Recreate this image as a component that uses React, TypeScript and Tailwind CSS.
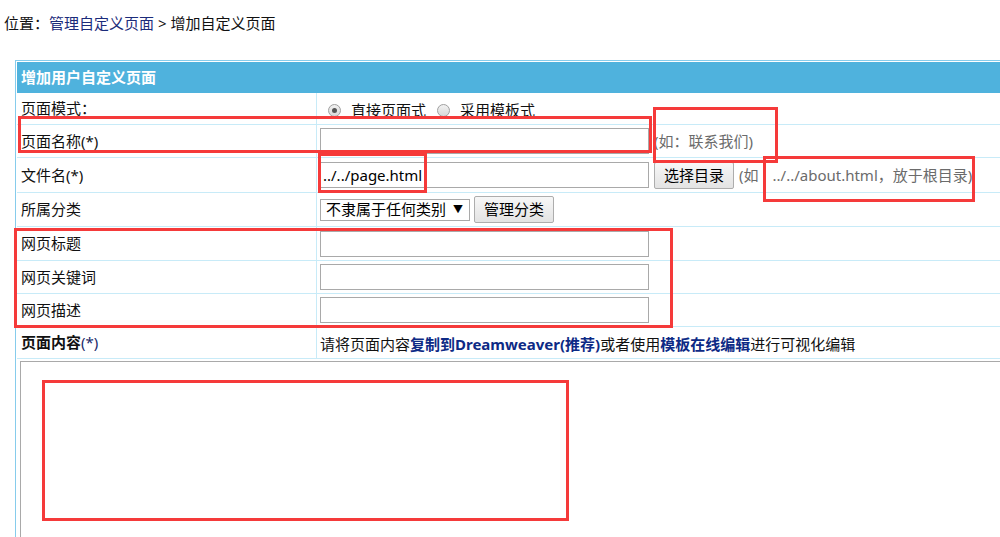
import React from "react";

const font = { fontFamily: '"Noto Sans", "Noto Sans CJK SC", sans-serif' };

function Row({ h, label, children, bold }: { h: string; label: React.ReactNode; children?: React.ReactNode; bold?: boolean }) {
  return (
    <div className={`flex ${h} border-b border-[#c8ebf8]`}>
      <div className={`w-[300px] shrink-0 flex items-center pl-[4px] border-r border-[#c8ebf8] ${bold ? "font-bold" : ""}`}>{label}</div>
      <div className="flex-1 flex items-center pl-[3px]">{children}</div>
    </div>
  );
}

function Input({ value }: { value?: string }) {
  return (
    <div className="w-[329px] h-[26px] border border-[#a9a9a9] bg-white flex items-center pl-[2px] text-black">{value}</div>
  );
}

function Btn({ children, h = "h-[27px]" }: { children: React.ReactNode; h?: string }) {
  return (
    <div className={`w-[80px] ${h} border border-[#adadad] rounded-[2px] bg-linear-to-b from-[#f7f7f7] to-[#e3e3e3] flex items-center justify-center text-black`}>
      {children}
    </div>
  );
}

function Radio({ checked }: { checked?: boolean }) {
  return (
    <span className="w-[13px] h-[13px] rounded-full border border-[#a0a0a0] bg-linear-to-b from-[#f2f2f2] to-[#d8d8d8] flex items-center justify-center">
      {checked && <span className="w-[5px] h-[5px] rounded-full bg-[#555]" />}
    </span>
  );
}

function RedBox({ cls }: { cls: string }) {
  return <div className={`absolute border-[3px] border-[#f53a3a] pointer-events-none ${cls}`} />;
}

export default function App() {
  return (
    <div className="relative w-[1000px] h-[537px] overflow-hidden bg-white text-[15px] text-[#111]" style={font}>
      <div className="pt-[13px] pl-[4px] leading-[20px]">
        位置：<span className="text-[#1b2b7a]">管理自定义页面</span> &gt; 增加自定义页面
      </div>

      <div className="mt-[27px] ml-[15px] w-[1000px] h-[500px] border-l border-t border-[#86ccec] p-[1px] pr-0">
        <div className="h-[31px] bg-[#4fb2dd] flex items-center pl-[4px] text-white font-bold">增加用户自定义页面</div>

        <Row h="h-[32px]" label="页面模式：">
          <div className="flex items-center pl-[8px] pt-[3px]">
            <Radio checked />
            <span className="ml-[10px]">直接页面式</span>
            <span className="ml-[11px]"><Radio /></span>
            <span className="ml-[10px]">采用模板式</span>
          </div>
        </Row>

        <Row h="h-[33px]" label="页面名称(*)">
          <Input />
          <span className="ml-[5px] text-[#6b6b6b]">(如：联系我们)</span>
        </Row>

        <Row h="h-[35px]" label="文件名(*)">
          <Input value="../../page.html" />
          <span className="ml-[5px]"><Btn>选择目录</Btn></span>
          <span className="ml-[5px] text-[#6b6b6b]">(如</span>
          <span className="ml-[14px] text-[#6b6b6b]">../../about.html，放于根目录)</span>
        </Row>

        <Row h="h-[34px]" label="所属分类">
          <div className="w-[150px] h-[22px] border border-[#a9a9a9] bg-white flex items-center justify-between pl-[5px] pr-[6px] text-black">
            <span>不隶属于任何类别</span>
            <span className="text-[10px]">▼</span>
          </div>
          <span className="ml-[4px]"><Btn>管理分类</Btn></span>
        </Row>

        <Row h="h-[34px]" label="网页标题">
          <Input />
        </Row>
        <Row h="h-[33px]" label="网页关键词">
          <Input />
        </Row>
        <Row h="h-[33px]" label="网页描述">
          <Input />
        </Row>

        <Row
          h="h-[32px]"
          bold
          label={
            <span>
              页面内容<span className="font-normal text-[#1b2b6a]">(*)</span>
            </span>
          }
        >
          <span className="pt-[4px]">
            请将页面内容<b className="text-[#0d2a85]">复制到Dreamweaver(推荐)</b>或者使用<b className="text-[#0d2a85]">模板在线编辑</b>进行可视化编辑
          </span>
        </Row>

        <div className="pl-[3px] pt-[2px]">
          <div className="h-[300px] border border-[#a9a9a9] bg-white" />
        </div>
      </div>

      <RedBox cls="left-[18px] top-[116px] w-[634px] h-[37px]" />
      <RedBox cls="left-[653px] top-[107px] w-[125px] h-[56px]" />
      <RedBox cls="left-[318px] top-[153px] w-[109px] h-[40px]" />
      <RedBox cls="left-[763px] top-[156px] w-[212px] h-[46px]" />
      <RedBox cls="left-[14px] top-[228px] w-[659px] h-[100px]" />
      <RedBox cls="left-[42px] top-[380px] w-[527px] h-[141px]" />
    </div>
  );
}
